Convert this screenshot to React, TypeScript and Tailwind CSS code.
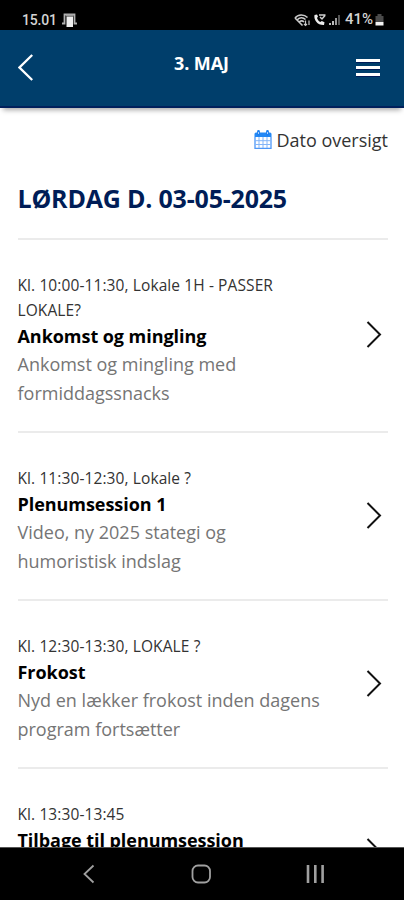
type Session = {
  time: string
  title: string
  text: string
}

const sessions: Session[] = [
  {
    time: 'Kl. 10:00-11:30, Lokale 1H - PASSER LOKALE?',
    title: 'Ankomst og mingling',
    text: 'Ankomst og mingling med formiddagssnacks',
  },
  {
    time: 'Kl. 11:30-12:30, Lokale ?',
    title: 'Plenumsession 1',
    text: 'Video, ny 2025 stategi og humoristisk indslag',
  },
  {
    time: 'Kl. 12:30-13:30, LOKALE ?',
    title: 'Frokost',
    text: 'Nyd en lækker frokost inden dagens program fortsætter',
  },
  {
    time: 'Kl. 13:30-13:45',
    title: 'Tilbage til plenumsession',
    text: '',
  },
]

function StatusBar() {
  return (
    <div className="flex h-[30px] shrink-0 items-center bg-black pt-[9px] pl-[22px] pr-5 font-['Roboto',sans-serif] text-[14px] leading-none text-[#d4d4d4]">
      <span className="font-medium tracking-[-0.2px]">15.01</span>
      <svg className="ml-[5px]" width="16" height="16" viewBox="0 0 16 16" fill="none">
        <path d="M0 11.500h2.500V2.500h10v9H15" stroke="#b0b0b0" strokeWidth="1.800" />
        <path d="M4 3.500h7.500" stroke="#999" strokeWidth="1.500" />
        <path d="M4.500 4.500h6.500v10.500H4.500z" fill="#eee" />
      </svg>
      <div className="ml-auto flex items-center">
        <svg width="17" height="14" viewBox="0 0 17 14" fill="none" stroke="#c9c9c9" strokeWidth="1.600">
          <path d="M1 5C4 1 10 1 13.500 4.500M3 7C5.500 4.300 9 4.300 11.500 6.500M5 9.300C6.500 7.500 8.500 7.500 10 9" />
          <path d="M1 5l7.500 7.500" />
          <path d="M11.500 7.500v5M10 11l1.500 1.500L13 11M15 12V7.500" strokeWidth="1.200" />
        </svg>
        <svg className="ml-[2px]" width="13" height="13" viewBox="0 0 13 13" fill="none">
          <path d="M1.500 2C.5 7 4.500 12.300 11 12L11.500 9.300 8.800 8 7.300 9C5.500 8 4.500 6.500 4 5L5 3.500 4 1.500z" fill="#ececec" />
          <path d="M6 2h6.500M7 4l2 2 3-3.500" stroke="#d0d0d0" strokeWidth="1.500" />
        </svg>
        <svg className="ml-[3px]" width="12" height="12" viewBox="0 0 12 12">
          <path d="M0 11h2V9H0zM3 11h2V7H3z" fill="#bbb" />
          <path d="M6 11h2V4H6z" fill="#999" />
          <path d="M9 11h2V1H9z" fill="#555" />
        </svg>
        <span className="ml-[4px] text-[15px] font-medium">41%</span>
        <svg className="ml-[2px]" width="9" height="12" viewBox="0 0 9 12">
          <path d="M2.500 0h4v2h2v6h-8V2h2z" fill="#4a4a4a" />
          <path d="M.5 8h8v3.500h-8z" fill="#f2f2f2" />
        </svg>
      </div>
    </div>
  )
}

function Header() {
  return (
    <header className="relative z-10 flex h-[78px] shrink-0 items-center justify-between border-b-2 border-[#00205c] bg-[#003e6b] px-[18px] text-white shadow-[0_5px_5px_-3px_rgba(0,0,0,0.35)]">
      <svg width="24" height="28" viewBox="0 0 24 28" fill="none" className="-mt-[3px]">
        <path d="M14.200 2L1.500 14.500 14.200 27" stroke="currentColor" strokeWidth="2.300" />
      </svg>
      <h1 className="mb-[11px] ml-[5px] text-[18px] font-bold leading-6 tracking-[-0.1px]">3. MAJ</h1>
      <div className="mr-[6px] flex w-6 flex-col gap-[4px] pb-[2px]">
        <span className="h-[3px] bg-white shadow-[0_1px_0_#001c58]" />
        <span className="h-[3px] bg-white shadow-[0_1px_0_#001c58]" />
        <span className="h-[3px] bg-white shadow-[0_1px_0_#001c58]" />
      </div>
    </header>
  )
}

function CalendarIcon() {
  return (
    <svg width="18" height="20" viewBox="0 0 18 20" fill="none">
      <path d="M.5 4Q.5 2.500 2 2.500h14Q17.500 2.500 17.500 4v3H.5z" fill="#2388f5" />
      <path d="M4.500 1.500v3M13.500 1.500v3" stroke="#1c7ff0" strokeWidth="2.800" strokeLinecap="round" />
      <path d="M4.500 2v2M13.500 2v2" stroke="#a8d0ff" />
      <path d="M1 7v11.300h16V7" stroke="#4d97f7" strokeWidth="1.300" />
      <path d="M5 7v11M9 7v11M13 7v11M1 10.700h16M1 14.500h16" stroke="#83b5f8" />
    </svg>
  )
}

function SessionRow({ time, title, text }: Session) {
  return (
    <li className="flex items-center justify-between border-t-2 border-[#ebebeb] pt-[33px] pb-[24px]">
      <div className="w-[310px]">
        <p className="w-[270px] text-[15.500px] leading-[25px] tracking-[0.1px] text-[#333]">{time}</p>
        <h3 className="text-[18px] font-bold leading-[27px] tracking-[-0.05px] text-black">{title}</h3>
        <p className={text.length > 45 ? 'min-h-[57px] text-[18px] leading-[28.500px] text-[#757575]' : 'min-h-[57px] w-[240px] text-[18px] leading-[28.500px] text-[#757575]'}>{text}</p>
      </div>
      <svg width="16" height="28" viewBox="0 0 16 28" fill="none" className="mr-[6px] mt-[-12px]">
        <path d="M1.500 2L14 14.500 1.500 27" stroke="#111" strokeWidth="2" />
      </svg>
    </li>
  )
}

function NavBar() {
  return (
    <nav className="flex h-[53px] shrink-0 items-center justify-between border-t border-[#555] bg-black pl-[82px] pr-[79px] text-[#a0a0a0]">
      <svg width="14" height="20" viewBox="0 0 14 20" fill="none" stroke="currentColor" strokeWidth="1.800">
        <path d="M11.500 1.500L2.500 10l9 8.500" />
      </svg>
      <svg width="20" height="20" viewBox="0 0 20 20" fill="none" stroke="currentColor" strokeWidth="1.800">
        <rect x="1.500" y="1.500" width="17.500" height="17" rx="5.500" />
      </svg>
      <svg width="19" height="18" viewBox="0 0 19 18" fill="none" stroke="currentColor" strokeWidth="2.600">
        <path d="M2 0v18M9.300 0v18M16.600 0v18" />
      </svg>
    </nav>
  )
}

export default function App() {
  return (
    <div className="flex h-[900px] w-[404px] flex-col overflow-hidden bg-white font-['Open_Sans',sans-serif]">
      <StatusBar />
      <Header />
      <main className="min-h-0 flex-1 overflow-hidden pl-[17.500px] pr-4">
        <div className="mt-5 flex h-6 items-center justify-end gap-1 text-[18px] text-[#333]">
          <CalendarIcon />
          <span>Dato oversigt</span>
        </div>
        <h2 className="mt-[30px] h-14 text-[25px] font-bold leading-[32px] tracking-[-0.2px] text-[#001d57]">LØRDAG D. 03-05-2025</h2>
        <ul>
          {sessions.map((session) => (
            <SessionRow key={session.time} {...session} />
          ))}
        </ul>
      </main>
      <NavBar />
    </div>
  )
}
